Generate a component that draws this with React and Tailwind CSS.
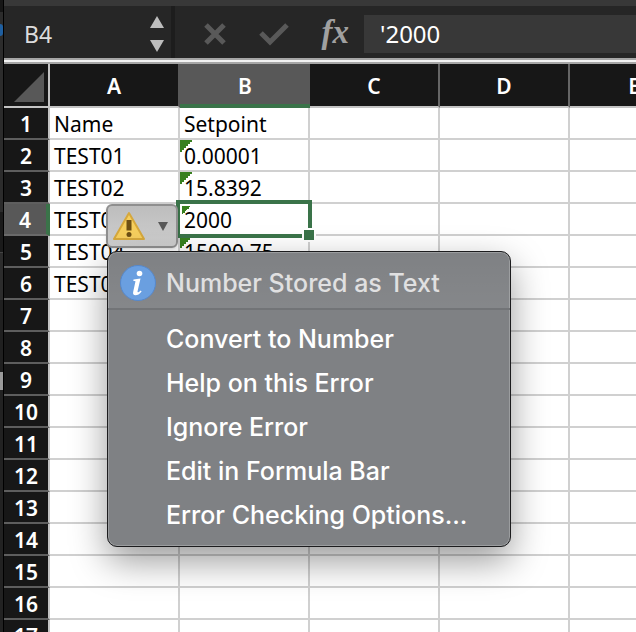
import React from "react";

const columns = ["A", "B", "C", "D", "E"];

const cells = {
  1: ["Name", "Setpoint"],
  2: ["TEST01", "0.00001"],
  3: ["TEST02", "15.8392"],
  4: ["TEST03", "2000"],
  5: ["TEST04", "15000.75"],
  6: ["TEST05", ""],
};

const flagged = [2, 3, 4, 5];

const rows = Array.from({ length: 17 }, (_, i) => i + 1);

const actions = [
  "Convert to Number",
  "Help on this Error",
  "Ignore Error",
  "Edit in Formula Bar",
  "Error Checking Options...",
];

function LeftEdge() {
  return (
    <div className="flex w-1 shrink-0 flex-col border-r border-black bg-[#2c2c2c]">
      <div className="h-3 bg-[#161616]" />
      <div className="h-3" />
      <div className="h-3 rounded-r-full bg-[#1f5fa0]" />
      <div className="h-44" />
      <div className="h-10 bg-[#1a1a1a]" />
      <div className="h-12 border-t border-[#444]" />
      <div className="h-[72px] bg-[#202020]" />
      <div className="h-[18px] bg-[#9a9a9a]" />
      <div className="grow bg-[#222]" />
    </div>
  );
}

function FormulaBar() {
  return (
    <div className="flex h-13 shrink-0 items-center bg-[#262626]">
      <input
        aria-label="Name box"
        defaultValue="B4"
        className="h-full w-[140px] shrink-0 bg-transparent pt-1 pl-5 text-[23px] text-[#dcdcdc] outline-none"
      />
      <div className="flex h-full w-[31px] shrink-0 flex-col items-start justify-center gap-3 border-r-4 border-[#1d1d1d] pt-1 pl-[5px]">
        <button aria-label="Previous name">
          <svg width="16" height="12" viewBox="0 0 16 12" className="block"><path d="M8 0L15 12H1Z" fill="#bdbdbd" /></svg>
        </button>
        <button aria-label="Next name">
          <svg width="16" height="12" viewBox="0 0 16 12" className="block"><path d="M1 0H15L8 12Z" fill="#bdbdbd" /></svg>
        </button>
      </div>
      <div className="flex h-full w-[189px] shrink-0 items-center justify-between pr-[15px] pl-7">
        <button aria-label="Cancel" className="pt-1">
          <svg width="24" height="24" viewBox="0 0 24 24" className="block"><path d="M3 3L21 21M21 3L3 21" stroke="#595959" strokeWidth="5" /></svg>
        </button>
        <button aria-label="Enter" className="pt-1">
          <svg width="30" height="24" viewBox="0 0 30 24" className="block"><path d="M2 11L11 20L28 3" fill="none" stroke="#595959" strokeWidth="5" /></svg>
        </button>
        <button
          aria-label="Insert function"
          className="flex items-baseline font-['Liberation_Serif',serif] text-[33px] leading-none font-bold text-[#a0a0a0] italic"
        >
          <span>f</span>
          <span>x</span>
        </button>
      </div>
      <input
        aria-label="Formula"
        defaultValue="'2000"
        className="mt-1 h-[38px] min-w-0 grow bg-[#383838] pb-0.5 pl-4 text-2xl text-white outline-none"
      />
    </div>
  );
}

function ErrorMark({ selected }) {
  return (
    <svg
      width={selected ? 8 : 12}
      height={selected ? 8 : 12}
      viewBox="0 0 12 12"
      shapeRendering="crispEdges"
      className={selected ? "absolute top-0.5 left-0.5" : "absolute top-0 left-0"}
    >
      <path d="M0 0H12V2H10V4H8V6H6V8H4V10H2V12H0Z" fill="#37801f" />
    </svg>
  );
}

function Selection() {
  return (
    <div className="absolute -top-1 -right-1 -bottom-1 -left-1 z-10 border-4 border-[#3a7349]">
      <div className="absolute -right-2 -bottom-2 size-3.5 border-2 border-white bg-[#3a7349]" />
    </div>
  );
}

function Sheet() {
  return (
    <table className="w-[696px] table-fixed border-separate border-spacing-0 text-[21px] leading-none">
      <colgroup>
        <col className="w-[46px]" />
        {columns.map((c) => <col key={c} className="w-[130px]" />)}
      </colgroup>
      <thead>
        <tr className="h-11">
          <td className="border-r-2 border-b-2 border-[#c4c4c4] bg-[#171717] p-0">
            <button aria-label="Select all" className="mt-1 ml-2.5 block">
              <svg width="30" height="30" viewBox="0 0 30 30" className="block"><path d="M30 0V30H0Z" fill="#585858" /></svg>
            </button>
          </td>
          {columns.map((c) => (
            <th
              key={c}
              scope="col"
              className={
                c === "B"
                  ? "border-b-4 border-[#3a7349] bg-[#585858] p-0 pt-1 font-semibold text-white"
                  : c === "A"
                    ? "border-r-2 border-b-2 border-r-[#585858] border-b-[#c4c4c4] bg-[#171717] p-0 pt-0.5 font-semibold text-white"
                    : "border-r-2 border-b-2 border-r-[#666] border-b-[#c4c4c4] bg-[#171717] p-0 pt-0.5 font-semibold text-white"
              }
            >
              {c}
            </th>
          ))}
        </tr>
      </thead>
      <tbody>
        {rows.map((r) => (
          <tr key={r} className="h-8">
            <th
              scope="row"
              className={
                r === 4
                  ? "border-r-4 border-b-2 border-r-[#3a7349] border-b-[#6a6a6a] bg-[#585858] p-0 pt-0.5 font-semibold text-white"
                  : "border-r-2 border-b-2 border-r-[#c4c4c4] border-b-[#5e5e5e] bg-[#171717] p-0 pt-0.5 font-semibold text-white"
              }
            >
              {r}
            </th>
            {columns.map((c, i) => (
              <td key={c} className="relative border-r-2 border-b-2 border-[#d0d0d0] bg-white p-0 pt-0.5 pl-1 text-black">
                {c === "B" && flagged.includes(r) && <ErrorMark selected={r === 4} />}
                <span className="relative">{cells[r] ? cells[r][i] : ""}</span>
                {c === "B" && r === 4 && <Selection />}
              </td>
            ))}
          </tr>
        ))}
      </tbody>
    </table>
  );
}

function WarningButton() {
  return (
    <button
      aria-label="Error options"
      className="flex h-11 w-[72px] items-center justify-between rounded-md border-2 border-[#8f8f8f] bg-linear-to-b from-[#bdbdbd] to-[#cfcfcf] pr-2 pl-1 shadow-sm"
    >
      <svg width="34" height="30" viewBox="0 0 34 30">
        <path d="M17 2L32 28H2Z" fill="#f6cf5e" stroke="#d6a83c" strokeWidth="2" strokeLinejoin="round" />
        <path d="M14.500 9H19.500V19.500H14.500Z" fill="#6d4f14" />
        <circle cx="17" cy="23.500" r="2.500" fill="#6d4f14" />
      </svg>
      <svg width="10" height="9" viewBox="0 0 10 9"><path d="M0 0H10L5 9Z" fill="#585858" /></svg>
    </button>
  );
}

function ErrorMenu() {
  return (
    <div
      role="menu"
      aria-label="Number Stored as Text"
      className="w-[404px] overflow-hidden rounded-[10px] border border-[#1c1c1e] bg-[#7f8184] font-['Inter',sans-serif] text-[25px] leading-8 font-medium shadow-[0_14px_36px_rgba(0,0,0,0.4)] inset-ring-1 inset-ring-[#9b9d9f]"
    >
      <div className="flex h-[58px] items-center gap-2.5 border-b-2 border-[#727477] bg-linear-to-b from-transparent to-white/5 pt-1.5 pl-3 text-[#e0e0e1]">
        <svg width="36" height="36" viewBox="0 0 36 36">
          <circle cx="18" cy="18" r="17.500" fill="#6a9fe0" stroke="#5688cb" />
          <circle cx="19.500" cy="8.500" r="2.800" fill="#fff" />
          <path d="M13.500 14.500L20.500 13.500L17.500 26.500C17.300 27.800 18.800 27.400 20.800 25.500L21.600 26.500C19.500 29.300 17.500 30.300 15.500 30.300C13.300 30.300 12.700 28.800 13.200 26.700L15.500 16.200L13.200 15.800Z" fill="#fff" />
        </svg>
        <span>Number Stored as Text</span>
      </div>
      <div className="flex flex-col pt-[7px] pb-[9px]">
        {actions.map((a) => (
          <button key={a} role="menuitem" className="h-11 pl-[58px] text-left text-white">
            {a}
          </button>
        ))}
      </div>
    </div>
  );
}

export default function App() {
  return (
    <div className="flex h-screen overflow-hidden bg-white font-['Noto_Sans',sans-serif]">
      <LeftEdge />
      <main className="flex min-w-0 grow flex-col">
        <div className="h-1.5 shrink-0 bg-[#383838]" />
        <FormulaBar />
        <div className="h-1.5 shrink-0 border-y-2 border-[#a6a6a6] bg-[#f2f2f2]" />
        <div className="relative min-h-0 grow overflow-hidden">
          <Sheet />
          <div className="absolute top-[187px] left-[103px] z-30">
            <ErrorMenu />
          </div>
          <div className="absolute top-[140px] left-[102px] z-20">
            <WarningButton />
          </div>
        </div>
      </main>
    </div>
  );
}
